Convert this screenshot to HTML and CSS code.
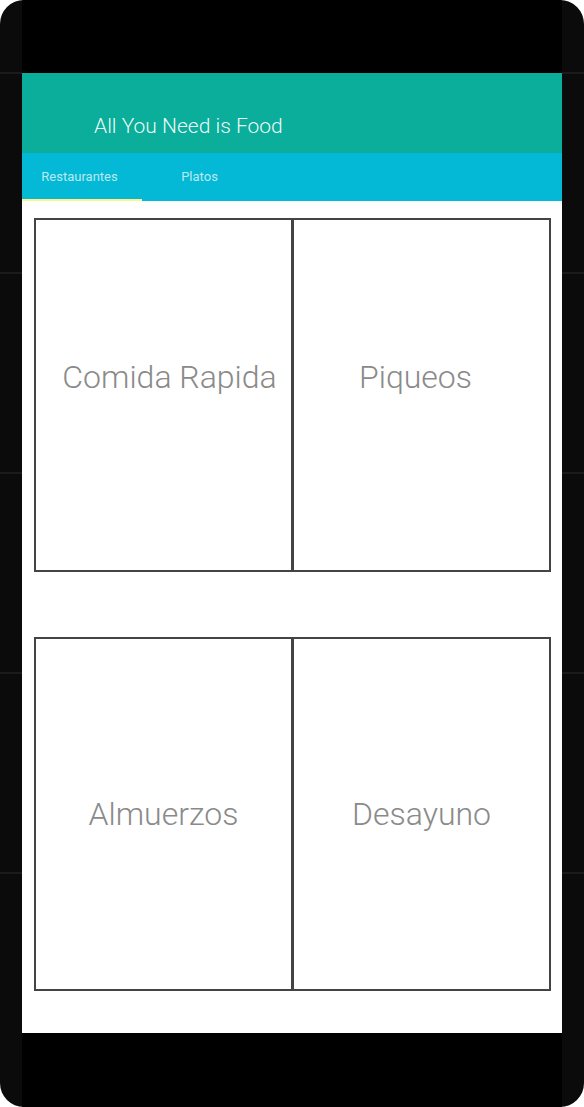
FILE: index.html
```html
<!DOCTYPE html>
<html lang="es">
<head>
<meta charset="utf-8">
<title>All You Need is Food</title>
<link rel="stylesheet" href="styles.css">
</head>
<body>
<div class="phone">
  <div class="side"></div>
  <div class="center">
    <div class="bezel-top"></div>
    <div class="screen">
      <header class="appbar">
        <h1 class="title">All You Need is Food</h1>
      </header>
      <nav class="tabs">
        <div class="tab tab-active">Restaurantes</div>
        <div class="tab">Platos</div>
      </nav>
      <main class="content">
        <div class="row row-first">
          <div class="card card-left"><span class="label">Comida Rapida</span></div>
          <div class="card card-right"><span class="label">Piqueos</span></div>
        </div>
        <div class="row">
          <div class="card"><span class="label">Almuerzos</span></div>
          <div class="card"><span class="label">Desayuno</span></div>
        </div>
      </main>
    </div>
    <div class="bezel-bottom"></div>
  </div>
  <div class="side"></div>
</div>
</body>
</html>
```

FILE: styles.css
```css
html, body {
  margin: 0;
  padding: 0;
  background: #ffffff;
}

.phone {
  width: 584px;
  height: 1107px;
  background: #0b0b0b;
  border-radius: 24px;
  overflow: hidden;
  display: flex;
  font-family: Roboto, "Noto Sans", sans-serif;
}

.side {
  width: 22px;
  flex: 0 0 22px;
  background-image: repeating-linear-gradient(to bottom,
    transparent 0, transparent 72px,
    #1b1b1b 72px, #1b1b1b 74px,
    transparent 74px, transparent 200px);
  background-size: 22px 900px;
  background-repeat: no-repeat;
}

.center {
  width: 540px;
  display: flex;
  flex-direction: column;
}

.bezel-top {
  height: 73px;
  background: #000;
}

.bezel-bottom {
  height: 74px;
  background: #000;
}

.screen {
  height: 960px;
  background: #ffffff;
  display: flex;
  flex-direction: column;
}

.appbar {
  height: 80px;
  background: #0aae9a;
  display: flex;
  align-items: flex-end;
  padding-left: 72px;
  box-sizing: border-box;
}

.title {
  margin: 0 0 15px 0;
  font-size: 21px;
  font-weight: 300;
  color: rgba(255, 255, 255, 0.95);
  line-height: 24px;
}

.tabs {
  height: 48px;
  background: #04b9d5;
  display: flex;
}

.tab {
  width: 120px;
  box-sizing: border-box;
  display: flex;
  align-items: center;
  justify-content: center;
  font-size: 13px;
  color: rgba(255, 255, 255, 0.72);
  border-bottom: 2px solid transparent;
  padding-right: 5px;
}

.tab-active {
  border-bottom-color: #fdf68c;
}

.content {
  flex: 1;
  padding: 17px 11px 0 12px;
  display: flex;
  flex-direction: column;
  gap: 65px;
}

.row {
  display: flex;
  height: 354px;
}

.card {
  width: 259px;
  box-sizing: border-box;
  border: 2px solid #444444;
  display: flex;
  align-items: center;
  justify-content: center;
}

.card + .card {
  margin-left: -1px;
}

.label {
  font-size: 32px;
  font-weight: 300;
  color: #8a8a8a;
  white-space: nowrap;
}

.row-first .card {
  padding-bottom: 36px;
}

.row-first .card-left {
  padding-left: 12px;
}

.row-first .card-right {
  padding-right: 12px;
}
```
